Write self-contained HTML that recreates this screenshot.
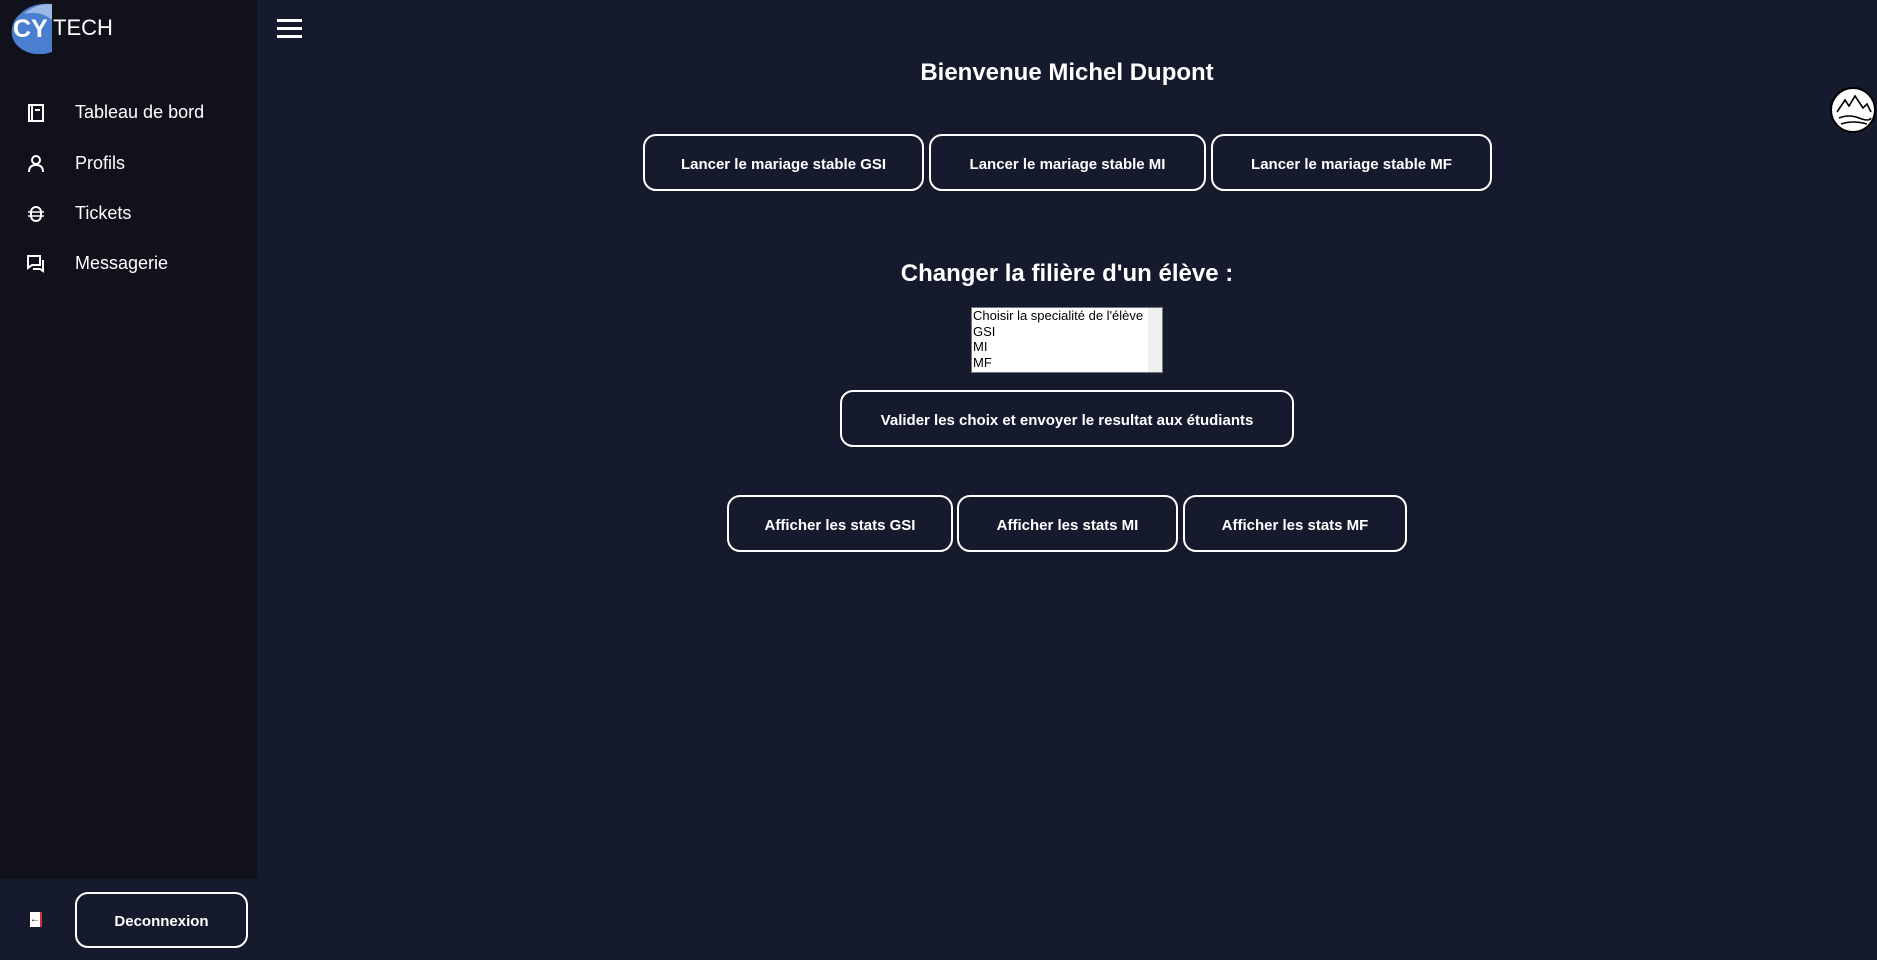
<!DOCTYPE html>
<html><head><meta charset="utf-8"><style>
*{box-sizing:border-box;margin:0;padding:0}
body{width:1877px;height:960px;background:#161a2d;font-family:"Liberation Sans",sans-serif;color:#fff;position:relative;overflow:hidden}
.side{position:absolute;left:0;top:0;width:257px;height:879px;background:#11111c}
.nav{position:absolute;left:0;font-size:18px;display:flex;align-items:center}
.nav svg{position:absolute;left:27px}
.nav span{position:absolute;left:75px;white-space:nowrap}
.btn{position:absolute;border:2px solid #fff;border-radius:13px;display:flex;align-items:center;justify-content:center;font-weight:bold;font-size:15px;color:#fff;padding-top:3px}
h1{position:absolute;width:100%;text-align:center;font-size:24px;font-weight:bold}
</style></head><body>
<div class="side"></div>
<svg style="position:absolute;left:10px;top:2px" width="45" height="52" viewBox="0 0 45 52"><path d="M10 12 Q22 0 42 2 L42 50 Q24 56 10 46 Q0 38 2 26 Q3 18 10 12Z" fill="#4a7fd0"/><path d="M42 2 L42 18 Q30 8 14 12 Q24 2 42 2Z" fill="#9bb8e6"/><text x="3" y="35" font-family="Liberation Sans" font-weight="bold" font-size="25" fill="#fff">CY</text></svg>
<div style="position:absolute;left:53px;top:15px;font-size:22px">TECH</div>
<div style="position:absolute;left:277px;top:19px;width:25px"><div style="height:3px;background:#fff;margin-bottom:5px"></div><div style="height:3px;background:#fff;margin-bottom:5px"></div><div style="height:3px;background:#fff"></div></div>
<div class="nav" style="top:113px"><svg width="16" height="18" viewBox="0 0 16 18" style="top:-9px;left:28px"><rect x="1" y="1" width="14" height="16" fill="none" stroke="#fff" stroke-width="2"/><line x1="4" y1="1" x2="4" y2="17" stroke="#fff" stroke-width="2"/><line x1="7" y1="6" x2="12" y2="6" stroke="#fff" stroke-width="2"/></svg><span style="top:-11px">Tableau de bord</span></div>
<div class="nav" style="top:164px"><svg width="16" height="18" viewBox="0 0 16 18" style="top:-9px;left:28px"><circle cx="8" cy="5" r="4" fill="none" stroke="#fff" stroke-width="2"/><path d="M1 17 Q1 10 8 10 Q15 10 15 17" fill="none" stroke="#fff" stroke-width="2"/></svg><span style="top:-11px">Profils</span></div>
<div class="nav" style="top:214px"><svg width="16" height="18" viewBox="0 0 16 18" style="top:-9px;left:28px"><rect x="3" y="2" width="10" height="14" rx="5" fill="none" stroke="#fff" stroke-width="2"/><line x1="0" y1="7" x2="16" y2="7" stroke="#fff" stroke-width="1.5"/><line x1="0" y1="11" x2="16" y2="11" stroke="#fff" stroke-width="1.5"/></svg><span style="top:-11px">Tickets</span></div>
<div class="nav" style="top:264px"><svg width="18" height="18" viewBox="0 0 18 18" style="top:-9px;left:27px"><path d="M1 1 H13 V10 H5 L1 13 Z" fill="none" stroke="#fff" stroke-width="2"/><path d="M16 5 V16 L13 14 H6" fill="none" stroke="#fff" stroke-width="2"/></svg><span style="top:-11px">Messagerie</span></div>
<div style="position:absolute;left:30px;top:912px;width:12px;height:15px;background:#fff;border-right:2px solid #c33;color:#000;font-size:10px;line-height:15px;text-align:center">←</div>
<div class="btn" style="left:75px;top:892px;width:173px;height:56px">Deconnexion</div>
<svg style="position:absolute;left:1829px;top:86px" width="48" height="48" viewBox="0 0 48 48"><circle cx="24" cy="24" r="22" fill="#fff" stroke="#000" stroke-width="2"/><path d="M8 26 L16 14 L20 20 L26 10 L34 22 L38 18 L42 26 M10 32 Q20 28 30 32 T42 32 M12 38 Q24 34 38 38" fill="none" stroke="#000" stroke-width="1.6"/></svg>
<h1 style="left:257px;width:1620px;top:59px">Bienvenue Michel Dupont</h1>
<div class="btn" style="left:643px;top:134px;width:281px;height:57px">Lancer le mariage stable GSI</div>
<div class="btn" style="left:929px;top:134px;width:277px;height:57px">Lancer le mariage stable MI</div>
<div class="btn" style="left:1211px;top:134px;width:281px;height:57px">Lancer le mariage stable MF</div>
<h1 style="left:257px;width:1620px;top:260px">Changer la filière d'un élève :</h1>
<div style="position:absolute;left:971px;top:307px;width:192px;height:66px;background:#fff;border:1px solid #767676;color:#000;font-size:13px;line-height:15.5px;padding-left:1px">Choisir la specialité de l'élève<br>GSI<br>MI<br>MF<div style="position:absolute;right:0;top:0;width:14px;height:64px;background:#f0f0f0"></div></div>
<div class="btn" style="left:840px;top:390px;width:454px;height:57px">Valider les choix et envoyer le resultat aux étudiants</div>
<div class="btn" style="left:727px;top:495px;width:226px;height:57px">Afficher les stats GSI</div>
<div class="btn" style="left:957px;top:495px;width:221px;height:57px">Afficher les stats MI</div>
<div class="btn" style="left:1183px;top:495px;width:224px;height:57px">Afficher les stats MF</div>
</body></html>
